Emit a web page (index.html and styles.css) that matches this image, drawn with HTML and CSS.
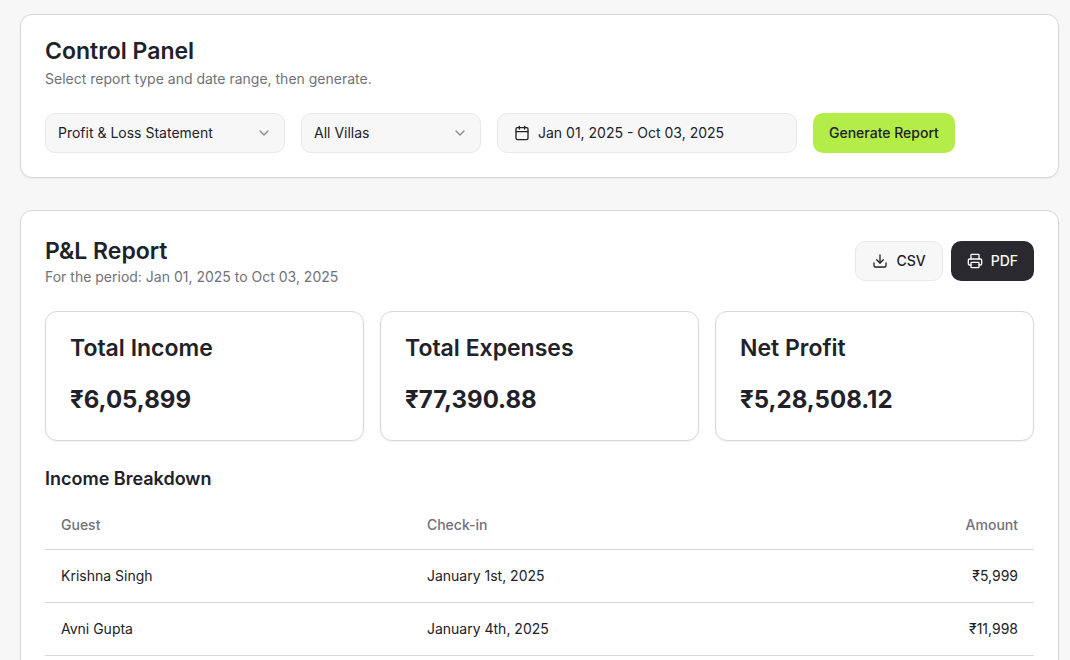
FILE: index.html
```html
<!DOCTYPE html>
<html lang="en">
<head>
    <meta charset="UTF-8">
    <meta name="viewport" content="width=device-width, initial-scale=1.0">
    <title>Reports</title>
    <link rel="stylesheet" href="styles.css">
</head>
<body>
    <main class="page">
        <!-- Control Panel -->
        <section class="card">
            <h2 class="card-title">Control Panel</h2>
            <p class="card-description">Select report type and date range, then generate.</p>
            <form class="controls">
                <div class="select-wrap select-report">
                    <select class="field" aria-label="Report type">
                        <option>Profit &amp; Loss Statement</option>
                    </select>
                    <svg class="icon chevron" viewBox="0 0 24 24"><path d="m6 9 6 6 6-6"/></svg>
                </div>
                <div class="select-wrap select-villa">
                    <select class="field" aria-label="Villa">
                        <option>All Villas</option>
                    </select>
                    <svg class="icon chevron" viewBox="0 0 24 24"><path d="m6 9 6 6 6-6"/></svg>
                </div>
                <button type="button" class="btn btn-outline date-btn">
                    <svg class="icon" viewBox="0 0 24 24">
                        <path d="M8 2v4"/>
                        <path d="M16 2v4"/>
                        <rect width="18" height="18" x="3" y="4" rx="2"/>
                        <path d="M3 10h18"/>
                    </svg>
                    Jan 01, 2025 - Oct 03, 2025
                </button>
                <button type="button" class="btn btn-primary">Generate Report</button>
            </form>
        </section>

        <!-- Report -->
        <section class="card">
            <div class="report-header">
                <div>
                    <h2 class="report-title">P&amp;L Report</h2>
                    <p class="report-period">For the period: Jan 01, 2025 to Oct 03, 2025</p>
                </div>
                <div class="actions">
                    <button type="button" class="btn btn-outline">
                        <svg class="icon" viewBox="0 0 24 24">
                            <path d="M21 15v4a2 2 0 0 1-2 2H5a2 2 0 0 1-2-2v-4"/>
                            <path d="m7 10 5 5 5-5"/>
                            <path d="M12 15V3"/>
                        </svg>
                        CSV
                    </button>
                    <button type="button" class="btn btn-dark">
                        <svg class="icon" viewBox="0 0 24 24">
                            <path d="M6 18H4a2 2 0 0 1-2-2v-5a2 2 0 0 1 2-2h16a2 2 0 0 1 2 2v5a2 2 0 0 1-2 2h-2"/>
                            <path d="M6 9V3a1 1 0 0 1 1-1h10a1 1 0 0 1 1 1v6"/>
                            <rect x="6" y="14" width="12" height="8" rx="1"/>
                        </svg>
                        PDF
                    </button>
                </div>
            </div>

            <div class="stats">
                <div class="card">
                    <h3 class="card-title">Total Income</h3>
                    <p class="stat-value">₹6,05,899</p>
                </div>
                <div class="card">
                    <h3 class="card-title">Total Expenses</h3>
                    <p class="stat-value">₹77,390.88</p>
                </div>
                <div class="card">
                    <h3 class="card-title">Net Profit</h3>
                    <p class="stat-value">₹5,28,508.12</p>
                </div>
            </div>

            <h3 class="table-title">Income Breakdown</h3>
            <table class="table">
                <thead>
                    <tr>
                        <th class="col-guest">Guest</th>
                        <th>Check-in</th>
                        <th class="amount">Amount</th>
                    </tr>
                </thead>
                <tbody>
                    <tr>
                        <td>Krishna Singh</td>
                        <td>January 1st, 2025</td>
                        <td class="amount">₹5,999</td>
                    </tr>
                    <tr>
                        <td>Avni Gupta</td>
                        <td>January 4th, 2025</td>
                        <td class="amount">₹11,998</td>
                    </tr>
                </tbody>
            </table>
        </section>
    </main>
</body>
</html>
```
FILE: styles.css
```css
* {
    margin: 0;
    padding: 0;
    box-sizing: border-box;
}

body {
    font-family: 'Inter', sans-serif;
    font-size: 14px;
    line-height: 20px;
    color: #212129;
    background: #f7f7f7;
}

.page {
    display: flex;
    flex-direction: column;
    gap: 32px;
    padding: 14px 11px 32px 20px;
}

.card {
    background: #fff;
    padding: 24px;
    border: 1px solid #d6d7da;
    border-radius: 12px;
    box-shadow: 0 1px 2px rgba(0, 0, 0, 0.05);
}

.card-title {
    font-size: 23px;
    font-weight: 600;
    line-height: 24px;
}

.card-description {
    margin-top: 6px;
    color: #71717b;
}

.icon {
    width: 16px;
    height: 16px;
    flex-shrink: 0;
    fill: none;
    stroke: currentColor;
    stroke-width: 2;
    stroke-linecap: round;
    stroke-linejoin: round;
}

/* Controls */
.controls {
    display: flex;
    flex-wrap: wrap;
    gap: 16px;
    margin-top: 24px;
}

.select-wrap {
    position: relative;
}

.select-report {
    width: 240px;
}

.select-villa {
    width: 180px;
}

.field {
    width: 100%;
    height: 40px;
    padding: 0 36px 0 12px;
    font: inherit;
    color: inherit;
    background: #f7f7f7;
    border: 1px solid #e9e9ea;
    border-radius: 10px;
    appearance: none;
    cursor: pointer;
}

.chevron {
    position: absolute;
    top: 12px;
    right: 13px;
    opacity: 0.5;
    pointer-events: none;
}

.btn {
    display: inline-flex;
    align-items: center;
    gap: 8px;
    height: 40px;
    padding: 0 16px;
    font: inherit;
    font-weight: 500;
    color: inherit;
    border: none;
    border-radius: 10px;
    cursor: pointer;
}

.btn-outline {
    background: #f7f7f7;
    border: 1px solid #e9e9ea;
}

.btn-primary {
    background: #b4ed47;
}

.btn-dark {
    background: #2a292f;
    color: #fafafa;
}

.date-btn {
    width: 300px;
    font-weight: 400;
}

/* Report */
.report-header {
    display: flex;
    align-items: center;
    justify-content: space-between;
}

.report-title {
    font-size: 23px;
    font-weight: 600;
    line-height: 32px;
}

.report-period {
    color: #71717b;
}

.actions {
    display: flex;
    gap: 8px;
}

.stats {
    display: grid;
    grid-template-columns: repeat(3, 1fr);
    gap: 16px;
    margin: 24px 0;
}

.stat-value {
    margin-top: 24px;
    font-size: 24px;
    font-weight: 700;
    line-height: 32px;
}

.table-title {
    margin-bottom: 8px;
    font-size: 18px;
    font-weight: 600;
    line-height: 28px;
}

.table {
    width: 100%;
    border-collapse: collapse;
}

.table tr {
    border-bottom: 1px solid #d6d7da;
}

.table th {
    height: 48px;
    padding: 0 16px;
    font-weight: 500;
    text-align: left;
    color: #71717b;
}

.table td {
    padding: 16px;
}

.table .amount {
    text-align: right;
}

.col-guest {
    width: 37%;
}
```
